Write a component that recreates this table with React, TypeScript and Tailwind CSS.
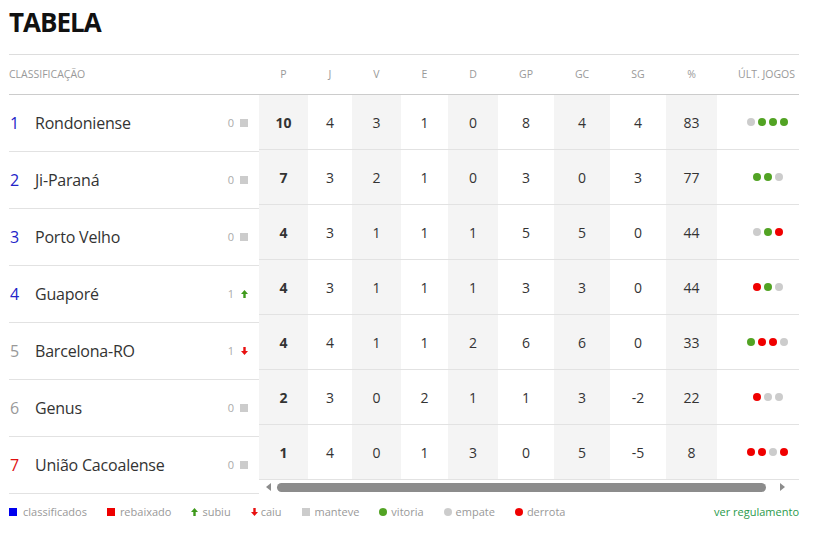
import React from "react";

type Dot = "v" | "e" | "d";
type Row = {
  pos: number;
  name: string;
  var: number;
  trend: "same" | "up" | "down";
  stats: (number | string)[];
  dots: Dot[];
};

const rows: Row[] = [
  { pos: 1, name: "Rondoniense", var: 0, trend: "same", stats: [10, 4, 3, 1, 0, 8, 4, 4, 83], dots: ["e", "v", "v", "v"] },
  { pos: 2, name: "Ji-Paraná", var: 0, trend: "same", stats: [7, 3, 2, 1, 0, 3, 0, 3, 77], dots: ["v", "v", "e"] },
  { pos: 3, name: "Porto Velho", var: 0, trend: "same", stats: [4, 3, 1, 1, 1, 5, 5, 0, 44], dots: ["e", "v", "d"] },
  { pos: 4, name: "Guaporé", var: 1, trend: "up", stats: [4, 3, 1, 1, 1, 3, 3, 0, 44], dots: ["d", "v", "e"] },
  { pos: 5, name: "Barcelona-RO", var: 1, trend: "down", stats: [4, 4, 1, 1, 2, 6, 6, 0, 33], dots: ["v", "d", "d", "e"] },
  { pos: 6, name: "Genus", var: 0, trend: "same", stats: [2, 3, 0, 2, 1, 1, 3, -2, 22], dots: ["d", "e", "e"] },
  { pos: 7, name: "União Cacoalense", var: 0, trend: "same", stats: [1, 4, 0, 1, 3, 0, 5, -5, 8], dots: ["d", "d", "e", "d"] },
];

const cols = [
  { label: "P", w: "w-[49px]", shade: true },
  { label: "J", w: "w-[44px]", shade: false },
  { label: "V", w: "w-[49px]", shade: true },
  { label: "E", w: "w-[47px]", shade: false },
  { label: "D", w: "w-[50px]", shade: true },
  { label: "GP", w: "w-[56px]", shade: false },
  { label: "GC", w: "w-[56px]", shade: true },
  { label: "SG", w: "w-[56px]", shade: false },
  { label: "%", w: "w-[51px]", shade: true },
];

const posColor = (p: number) =>
  p <= 4 ? "text-[#2323c8]" : p === 7 ? "text-[#e01010]" : "text-[#999999]";

const dotColor: Record<Dot, string> = {
  v: "bg-[#52a324]",
  e: "bg-[#cccccc]",
  d: "bg-[#f00000]",
};

function UpArrow() {
  return (
    <svg width="7" height="8" viewBox="0 0 7 8" className="block">
      <path d="M3.5 0 L7 4 L4.7 4 L4.7 8 L2.3 8 L2.3 4 L0 4 Z" fill="#3f9a1c" />
    </svg>
  );
}

function DownArrow() {
  return (
    <svg width="7" height="8" viewBox="0 0 7 8" className="block">
      <path d="M3.5 8 L7 4 L4.7 4 L4.7 0 L2.3 0 L2.3 4 L0 4 Z" fill="#e81010" />
    </svg>
  );
}

function Trend({ t }: { t: Row["trend"] }) {
  if (t === "up") return <UpArrow />;
  if (t === "down") return <DownArrow />;
  return <span className="block w-[8px] h-[8px] bg-[#cccccc]" />;
}

export default function App() {
  return (
    <div
      className="bg-white w-[817px] h-[536px] px-[9px] text-[#333333]"
      style={{ fontFamily: '"Open Sans", "Liberation Sans", sans-serif' }}
    >
      <div className="h-[54px] pt-[4px]">
        <h1 className="text-[26px] leading-[36px] font-bold tracking-[-1px] text-[#111111]">TABELA</h1>
      </div>
      <div className="flex w-[790px] border-t border-[#dddddd]">
        {/* left */}
        <div className="w-[250px]">
          <div className="h-[40px] flex items-center border-b border-[#cccccc] text-[10.5px] text-[#999999]">
            CLASSIFICAÇÃO
          </div>
          {rows.map((r) => (
            <div key={r.pos} className="h-[57px] flex items-center border-b border-[#e2e2e2]">
              <span className={`w-[26px] pl-[1px] text-[16px] ${posColor(r.pos)}`}>{r.pos}</span>
              <span className="flex-1 text-[16px] text-[#333333] tracking-[-0.2px]">{r.name}</span>
              <span className="text-[11px] text-[#aaaaaa] mr-[6px]">{r.var}</span>
              <span className="w-[8px] mr-[11px] flex justify-center">
                <Trend t={r.trend} />
              </span>
            </div>
          ))}
        </div>
        {/* right */}
        <div className="w-[540px]">
          <div className="h-[40px] flex items-center border-b border-[#cccccc] text-[10.5px] text-[#999999]">
            {cols.map((c) => (
              <div key={c.label} className={`${c.w} text-center`}>
                {c.label}
              </div>
            ))}
            <div className="w-[82px] text-center pl-[17px] whitespace-nowrap">ÚLT. JOGOS</div>
          </div>
          {rows.map((r) => (
            <div key={r.pos} className="h-[55px] flex border-b border-[#e2e2e2] text-[14px] text-[#333333]">
              {cols.map((c, i) => (
                <div
                  key={c.label}
                  className={`${c.w} flex items-center justify-center ${c.shade ? "bg-[#f4f4f4]" : ""} ${i === 0 ? "font-bold" : ""}`}
                >
                  {r.stats[i]}
                </div>
              ))}
              <div className="w-[82px] flex items-center justify-center pl-[19px] gap-[3px]">
                {r.dots.map((d, i) => (
                  <span key={i} className={`w-[8px] h-[8px] rounded-full ${dotColor[d]}`} />
                ))}
              </div>
            </div>
          ))}
          {/* scrollbar */}
          <div className="h-[14px] flex items-center">
            <div className="w-[18px] flex justify-center">
              <span className="w-0 h-0 border-y-[4px] border-y-transparent border-r-[5px] border-r-[#8c8c8c]" />
            </div>
            <div className="w-[489px] h-[9px] rounded-full bg-[#8c8c8c]" />
            <div className="flex-1 flex justify-center">
              <span className="w-0 h-0 border-y-[4px] border-y-transparent border-l-[5px] border-l-[#8c8c8c]" />
            </div>
          </div>
        </div>
      </div>
      {/* legend */}
      <div className="w-[790px] h-[36px] flex items-center text-[11px] text-[#999999]">
        <span className="flex items-center mr-[20px]">
          <span className="w-[8px] h-[8px] bg-[#0000ee] mr-[6px]" />classificados
        </span>
        <span className="flex items-center mr-[20px]">
          <span className="w-[8px] h-[8px] bg-[#ee0000] mr-[5px]" />rebaixado
        </span>
        <span className="flex items-center mr-[20px]">
          <span className="mr-[4px]"><UpArrow /></span>subiu
        </span>
        <span className="flex items-center mr-[20px]">
          <span className="mr-[3px]"><DownArrow /></span>caiu
        </span>
        <span className="flex items-center mr-[20px]">
          <span className="w-[8px] h-[8px] bg-[#cccccc] mr-[5px]" />manteve
        </span>
        <span className="flex items-center mr-[20px]">
          <span className="w-[8px] h-[8px] rounded-full bg-[#52a324] mr-[4px]" />vitoria
        </span>
        <span className="flex items-center mr-[20px]">
          <span className="w-[8px] h-[8px] rounded-full bg-[#cccccc] mr-[4px]" />empate
        </span>
        <span className="flex items-center">
          <span className="w-[8px] h-[8px] rounded-full bg-[#f00000] mr-[4px]" />derrota
        </span>
        <span className="ml-auto text-[#2a9a4c]">ver regulamento</span>
      </div>
    </div>
  );
}
